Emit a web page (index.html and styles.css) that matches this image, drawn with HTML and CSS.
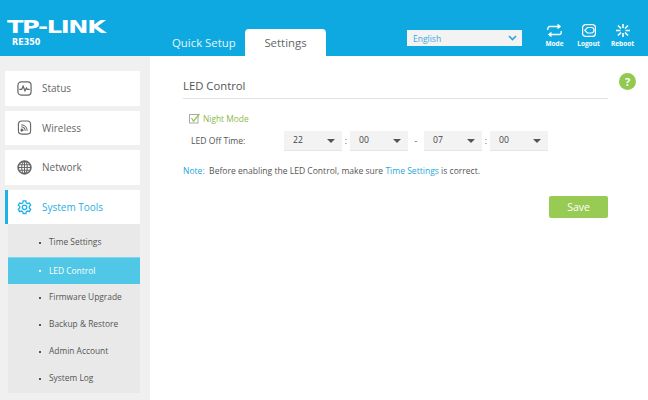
FILE: index.html
```html
<!DOCTYPE html>
<html lang="en">
<head>
<meta charset="utf-8">
<title>TP-Link RE350</title>
<link rel="stylesheet" href="styles.css">
</head>
<body>
<header class="header">
  <div class="brand">
    <div class="logo">TP-LINK</div>
    <div class="model">RE350</div>
  </div>
  <nav class="tabs">
    <span class="tab">Quick Setup</span>
    <span class="tab tab-active">Settings</span>
  </nav>
  <div class="lang">
    <span>English</span>
    <svg class="lang-arrow" width="9" height="6" viewBox="0 0 9 6"><path d="M1 1l3.500 3.500L8 1" fill="none" stroke="#2aa5e0" stroke-width="1.600"/></svg>
  </div>
  <div class="actions">
    <div class="action">
      <svg width="15" height="13" viewBox="0 0 15 13" fill="none" stroke="#fff" stroke-width="1.300"><path d="M.8 6V4.500a2 2 0 0 1 2-2h10M10.500 .4l2.600 2.100-2.600 2.100"/><path d="M14.200 7v1.500a2 2 0 0 1-2 2h-10M4.500 8.400l-2.600 2.100 2.600 2.100"/></svg>
      <span>Mode</span>
    </div>
    <div class="action">
      <svg width="14" height="13" viewBox="0 0 14 13" fill="none" stroke="#fff" stroke-width="1.200"><rect x=".6" y=".6" width="12.800" height="11.800" rx="3"/><path d="M5.500 3.500h3.800a2.500 2.500 0 0 1 0 5.500H5.500L2.800 6.300z"/></svg>
      <span>Logout</span>
    </div>
    <div class="action">
      <svg width="14" height="13" viewBox="0 0 14 13" fill="none" stroke="#fff" stroke-width="1.600"><path d="M7 0v4M7 9v4M0 6.500h4.500M9.500 6.500H14M2 1.500l3 3M9 8.500l3 3M12 1.500l-3 3M5 8.500l-3 3"/></svg>
      <span>Reboot</span>
    </div>
  </div>
</header>
<div class="main">
  <aside class="sidebar">
    <div class="nav-item">
      <svg class="nav-icon" width="15" height="15" viewBox="0 0 16 16" fill="none" stroke="#666" stroke-width="1.300"><rect x="1" y="1" width="14" height="14" rx="3.500"/><path d="M2.500 9h2.500l1.500-3.500 2 5 1.500-3 1 1.500h2.500"/></svg>
      <span>Status</span>
    </div>
    <div class="nav-item">
      <svg class="nav-icon" width="15" height="15" viewBox="0 0 16 16" fill="none" stroke="#666" stroke-width="1.200"><rect x="1.500" y="1" width="13" height="14" rx="3.500"/><path d="M4.500 5a7 7 0 0 1 6.500 6.500M4.500 7.200a4.800 4.800 0 0 1 4.300 4.300M4.500 9.300a2.700 2.700 0 0 1 2.200 2.200"/><circle cx="5" cy="11" r=".8" fill="#666"/></svg>
      <span>Wireless</span>
    </div>
    <div class="nav-item">
      <svg class="nav-icon" width="15" height="15" viewBox="0 0 16 16" fill="none" stroke="#666" stroke-width="1.100"><circle cx="8" cy="8" r="6.800" stroke-width="1.800"/><ellipse cx="8" cy="8" rx="3" ry="6.500"/><path d="M8 1.500v13M1.500 8h13M2.500 5h11M2.500 11h11"/></svg>
      <span>Network</span>
    </div>
    <div class="nav-item nav-item-active">
      <svg class="nav-icon" width="15" height="15" viewBox="0 0 16 16" fill="none" stroke="#1fb0e6" stroke-width="1.400"><path d="M6.600 1h2.800l.4 2 1.400.8 2-.6 1.400 2.400-1.500 1.400v1.600l1.500 1.400-1.400 2.400-2-.6-1.400.8-.4 2H6.600l-.4-2-1.400-.8-2 .6L1.400 10l1.500-1.400V7L1.400 5.600l1.400-2.400 2 .6 1.400-.8z"/><circle cx="8" cy="7.800" r="2.400"/></svg>
      <span>System Tools</span>
    </div>
    <ul class="subnav">
      <li class="sub-item">Time Settings</li>
      <li class="sub-item sub-item-active">LED Control</li>
      <li class="sub-item">Firmware Upgrade</li>
      <li class="sub-item">Backup &amp; Restore</li>
      <li class="sub-item">Admin Account</li>
      <li class="sub-item">System Log</li>
    </ul>
  </aside>
  <main class="content">
    <div class="help">?</div>
    <h1 class="title">LED Control</h1>
    <label class="night">
      <svg width="12" height="11" viewBox="0 0 12 11"><rect x=".5" y="1.500" width="8.500" height="8.500" fill="#fff" stroke="#aaa"/><path d="M2.500 5l2 3.200L10.500 .8" fill="none" stroke="#8cc63f" stroke-width="1.200"/></svg>
      <span>Night Mode</span>
    </label>
    <div class="time-row">
      <span class="time-label">LED Off Time:</span>
      <span class="select">22</span>
      <span class="sep">:</span>
      <span class="select">00</span>
      <span class="sep sep-dash">-</span>
      <span class="select">07</span>
      <span class="sep">:</span>
      <span class="select">00</span>
    </div>
    <p class="note"><span class="note-key">Note:</span>&nbsp; Before enabling the LED Control, make sure <span class="note-link">Time Settings</span> is correct.</p>
    <div class="footer"><button class="save">Save</button></div>
  </main>
</div>
</body>
</html>
```
FILE: styles.css
```css
* { box-sizing: border-box; }
html, body { margin: 0; height: 400px; overflow: hidden; }
body { font-family: "Open Sans", sans-serif; font-size: 8.500px; color: #555; background: #fff; }
.header { height: 56px; background: #0fa9e1; display: flex; color: #fff; }
.brand { width: 172px; padding: 19px 0 0 7px; }
.logo { font-family: "DejaVu Sans", sans-serif; font-weight: 700; font-size: 18px; line-height: 15px; letter-spacing: -1px; transform: scaleX(1.340); transform-origin: left; }
.model { font-family: "DejaVu Sans", sans-serif; font-size: 8px; font-weight: 700; line-height: 10px; margin: 4px 0 0 5px; }
.tabs { width: 235px; display: flex; align-items: flex-end; }
.tab { font-size: 11.400px; width: 73px; height: 27px; line-height: 27px; color: #e6f6fc; white-space: nowrap; }
.tab-active { width: 81px; text-align: center; background: #fff; color: #666; border-radius: 4px 4px 0 0; }
.lang { width: 115px; height: 16px; margin-top: 30px; background: #f3f3f3; color: #3aa9e0; display: flex; align-items: center; justify-content: space-between; padding: 0 5px 0 6px; font-size: 8.500px; }
.actions { display: flex; margin-left: 19px; gap: 7px; padding-top: 24px; }
.action { width: 27px; display: flex; flex-direction: column; align-items: center; font-size: 6.500px; font-weight: 700; white-space: nowrap; gap: 1px; line-height: 11px; }
.main { display: flex; height: 344px; }
.sidebar { width: 150px; background: #f0f0f0; padding: 15px 10px 0 5px; }
.nav-item { height: 34.600px; margin-bottom: 5px; background: #fff; display: flex; align-items: center; padding-left: 12px; gap: 10px; font-size: 10px; color: #666; }
.nav-icon { flex: none; }
.nav-item-active { color: #1fb0e6; border-left: 3px solid #1fb0e6; padding-left: 9px; margin-bottom: 0; }
.subnav { list-style: none; margin: 0 0 0 3px; padding: 5px 0 0; background: #e9e9e9; height: 169px; }
.sub-item { height: 27.200px; line-height: 26.400px; padding-left: 41px; font-size: 8.400px; color: #555; position: relative; }
.sub-item::before { content: ""; position: absolute; left: 31px; top: 13px; width: 2px; height: 2px; background: #555; }
.sub-item-active { background: #50c7e6; color: #fff; border-top: 1px solid #7dd6ec; line-height: 25.400px; }
.sub-item-active::before { background: #fff; top: 12px; }
.content { flex: 1; padding: 23px 40px 0 33px; position: relative; }
.help { position: absolute; top: 17px; right: 12px; width: 17px; height: 17px; border-radius: 50%; background: #92c94f; color: #fff; font-size: 11px; font-weight: 700; text-align: center; line-height: 17px; }
.title { margin: 0; font-size: 11.300px; font-weight: 400; line-height: 14px; height: 20px; color: #555; border-bottom: 1px solid #e2e2e2; }
.night { display: flex; align-items: center; gap: 2px; margin: 13px 0 0 6px; height: 12px; color: #8cb84a; font-size: 8.400px; }
.time-row { display: flex; align-items: center; margin-top: 7px; padding-left: 8px; height: 20px; font-size: 8.600px; }
.time-label { width: 93px; }
.select { width: 58px; height: 20px; background: #f3f3f3; border-bottom: 1px solid #e6e6e6; line-height: 19px; padding-left: 9px; position: relative; color: #444; }
.select::after { content: ""; position: absolute; right: 7px; top: 8px; border: 4px solid transparent; border-top: 4px solid #555; border-bottom: 0; }
.sep { width: 8px; text-align: center; }
.sep-dash { width: 16px; }
.note { margin: 14px 0 0; line-height: 12px; font-size: 8.550px; }
.note-key, .note-link { color: #1fa8dc; }
.footer { display: flex; justify-content: flex-end; margin-top: 19px; }
.save { width: 59px; height: 22px; border: 0; border-radius: 2px; background: #98cb54; color: #fff; font: 10.500px "Open Sans", sans-serif; }
```
